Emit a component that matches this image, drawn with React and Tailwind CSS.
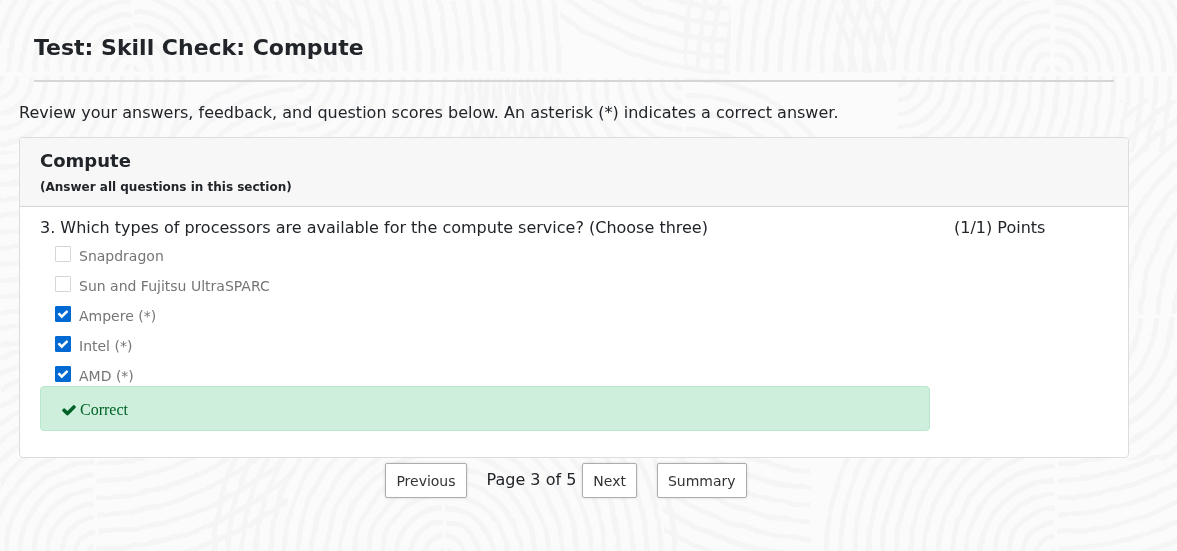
import React, { useState } from 'react';

const fans = [
  { x: -10, y: 0, w: 141, h: 72, cx: 131, cy: 73, from: 6, to: 170, step: 13 },
  { x: 134, y: 0, w: 434, h: 72, cx: 133, cy: 73, from: 6, to: 430, step: 14 },
  { x: 295, y: 0, w: 60, h: 72, cx: 240, cy: 130, from: 80, to: 160, step: 15 },
  { x: 560, y: -10, w: 170, h: 84, cx: 740, cy: -232, from: 225, to: 306, step: 16 },
  { x: 684, y: 0, w: 46, h: 72, cx: 1050, cy: 73, from: 324, to: 372, step: 14 },
  { x: 730, y: 0, w: 320, h: 72, cx: 1052, cy: 73, from: 6, to: 322, step: 14 },
  { x: 836, y: 0, w: 58, h: 72, cx: 684, cy: 100, from: 160, to: 230, step: 14 },
  { x: 1055, y: 0, w: 130, h: 72, cx: 1054, cy: 73, from: 6, to: 160, step: 13 },
  { x: 0, y: 76, w: 190, h: 75, cx: -6, cy: 76, from: 8, to: 190, step: 15 },
  { x: 160, y: 76, w: 136, h: 75, cx: 300, cy: 230, from: 90, to: 158, step: 17 },
  { x: 297, y: 78, w: 270, h: 75, cx: 297, cy: 80, from: 8, to: 268, step: 14 },
  { x: 450, y: 78, w: 232, h: 75, cx: 684, cy: 80, from: 8, to: 230, step: 14 },
  { x: 685, y: 78, w: 210, h: 75, cx: 685, cy: 246, from: 100, to: 168, step: 17 },
  { x: 898, y: 76, w: 279, h: 75, cx: 896, cy: 78, from: 8, to: 278, step: 14 },
  { x: 1120, y: 100, w: 60, h: 215, cx: 1312, cy: 317, from: 120, to: 290, step: 17 },
  { x: 1120, y: 318, w: 60, h: 142, cx: 1050, cy: 310, from: 75, to: 240, step: 16 },
  { x: 0, y: 150, w: 24, h: 200, cx: -60, cy: -300, from: 440, to: 680, step: 16 },
  { x: 0, y: 350, w: 94, h: 204, cx: 96, cy: 552, from: 6, to: 260, step: 14 },
  { x: 97, y: 455, w: 190, h: 100, cx: 90, cy: 240, from: 190, to: 330, step: 17 },
  { x: 208, y: 455, w: 235, h: 100, cx: 444, cy: 556, from: 6, to: 236, step: 14 },
  { x: 446, y: 455, w: 240, h: 100, cx: 445, cy: 556, from: 6, to: 240, step: 14 },
  { x: 664, y: 455, w: 147, h: 100, cx: 830, cy: 245, from: 210, to: 340, step: 17 },
  { x: 818, y: 455, w: 236, h: 100, cx: 1056, cy: 556, from: 6, to: 240, step: 14 },
  { x: 1058, y: 455, w: 120, h: 100, cx: 1050, cy: 240, from: 190, to: 330, step: 17 },
];

function Backdrop() {
  return (
    <svg className="pointer-events-none absolute top-0 left-0 h-full w-full" aria-hidden="true">
      <defs>
        <filter id="rough" x="0" y="0" width="100%" height="100%" colorInterpolationFilters="sRGB">
          <feTurbulence type="fractalNoise" baseFrequency="0.05" numOctaves="2" seed="4" />
          <feDisplacementMap in="SourceGraphic" scale="4" xChannelSelector="R" yChannelSelector="G" />
          <feGaussianBlur stdDeviation="0.5" />
        </filter>
        {fans.map((f, i) => (
          <clipPath id={`fan-${i}`} key={i}>
            <rect x={f.x} y={f.y} width={f.w} height={f.h} />
          </clipPath>
        ))}
      </defs>
      <g filter="url(#rough)" fill="none" stroke="#f5f5f5" strokeWidth="5">
        {fans.map((f, i) => (
          <g clipPath={`url(#fan-${i})`} key={i}>
            {Array.from({ length: Math.floor((f.to - f.from) / f.step) + 1 }, (_, k) => (
              <circle key={k} cx={f.cx} cy={f.cy} r={f.from + k * f.step} />
            ))}
          </g>
        ))}
      </g>
    </svg>
  );
}

function CheckMark({ className }) {
  return (
    <svg viewBox="0 0 1792 1792" fill="currentColor" className={className} aria-hidden="true">
      <path d="M1671 566q0 40-28 68l-724 724-136 136q-28 28-68 28t-68-28l-136-136-362-362q-28-28-28-68t28-68l136-136q28-28 68-28t68 28l294 295 656-657q28-28 68-28t68 28l136 136q28 28 28 68z" />
    </svg>
  );
}

const options = [
  { id: 'snapdragon', label: 'Snapdragon', checked: false },
  { id: 'ultrasparc', label: 'Sun and Fujitsu UltraSPARC', checked: false },
  { id: 'ampere', label: 'Ampere (*)', checked: true },
  { id: 'intel', label: 'Intel (*)', checked: true },
  { id: 'amd', label: 'AMD (*)', checked: true },
];

function Option({ id, label, checked }) {
  const [on, setOn] = useState(checked);
  return (
    <li className="flex h-[30px] items-start gap-2">
      <span className="grid size-4 shrink-0">
        <input
          id={id}
          type="checkbox"
          checked={on}
          onChange={() => setOn(!on)}
          className="col-start-1 row-start-1 size-4 appearance-none rounded-[1px] border border-[#d6d6d6] bg-white checked:border-[#0069d2] checked:bg-[#0069d2]"
        />
        {on && (
          <CheckMark className="pointer-events-none col-start-1 row-start-1 size-3 place-self-center text-white" />
        )}
      </span>
      <label htmlFor={id} className="text-sm leading-5 text-[#757575]">{label}</label>
    </li>
  );
}

function PageButton({ children }) {
  return (
    <button
      type="button"
      className="h-[35px] rounded-[2px] border border-[#adadad] bg-white px-2.5 text-sm text-[#333] shadow-[0_0_3px_rgba(0,0,0,0.15)]"
    >
      {children}
    </button>
  );
}

export default function App() {
  return (
    <div className="relative min-h-screen overflow-hidden bg-[#fbfbfb] font-['Verdana','DejaVu_Sans',sans-serif] text-base text-[#212529]">
      <Backdrop />
      <main className="relative pr-12 pl-[19px]">
        <header className="mr-[15px] ml-[15px] border-b-2 border-[#d6d6d6] pt-[33px] pb-[17px]">
          <h1 className="text-[22px] leading-[30px] font-bold">Test: Skill Check: Compute</h1>
        </header>
        <p className="pt-[19px] leading-6">
          Review your answers, feedback, and question scores below. An asterisk (*) indicates a correct answer.
        </p>
        <section className="mt-3 rounded-[4px] border border-[#dcdcdc] bg-white">
          <div className="rounded-t-[3px] border-b border-[#d6d6d6] bg-[#f7f7f7] px-5 pt-[11px] pb-[9px]">
            <h2 className="text-lg leading-6 font-bold">Compute</h2>
            <p className="pt-1 text-xs leading-5 font-bold">(Answer all questions in this section)</p>
          </div>
          <div className="flex px-5 pt-[9px] pb-[26px]">
            <div className="min-w-0 flex-1">
              <p className="leading-6">3. Which types of processors are available for the compute service? (Choose three)</p>
              <ul className="pt-1.5 pl-[15px]">
                {options.map((o) => <Option key={o.id} {...o} />)}
              </ul>
              <div className="-mt-[10px] flex h-[45px] items-center gap-[3px] rounded-[4px] border border-[#b8e8cb] bg-[#cdefdb] pt-0.5 pl-5 font-['Liberation_Serif',serif] text-[#006227]">
                <CheckMark className="size-4" />
                <span>Correct</span>
              </div>
            </div>
            <p className="w-[178px] pl-6 leading-6">(1/1) Points</p>
          </div>
        </section>
        <nav className="flex items-start justify-center pt-[5px] pr-4" aria-label="Pages">
          <PageButton>Previous</PageButton>
          <span className="pt-[5px] pr-1.5 pl-5 leading-6">Page 3 of 5</span>
          <PageButton>Next</PageButton>
          <span className="w-5" />
          <PageButton>Summary</PageButton>
        </nav>
      </main>
    </div>
  );
}
